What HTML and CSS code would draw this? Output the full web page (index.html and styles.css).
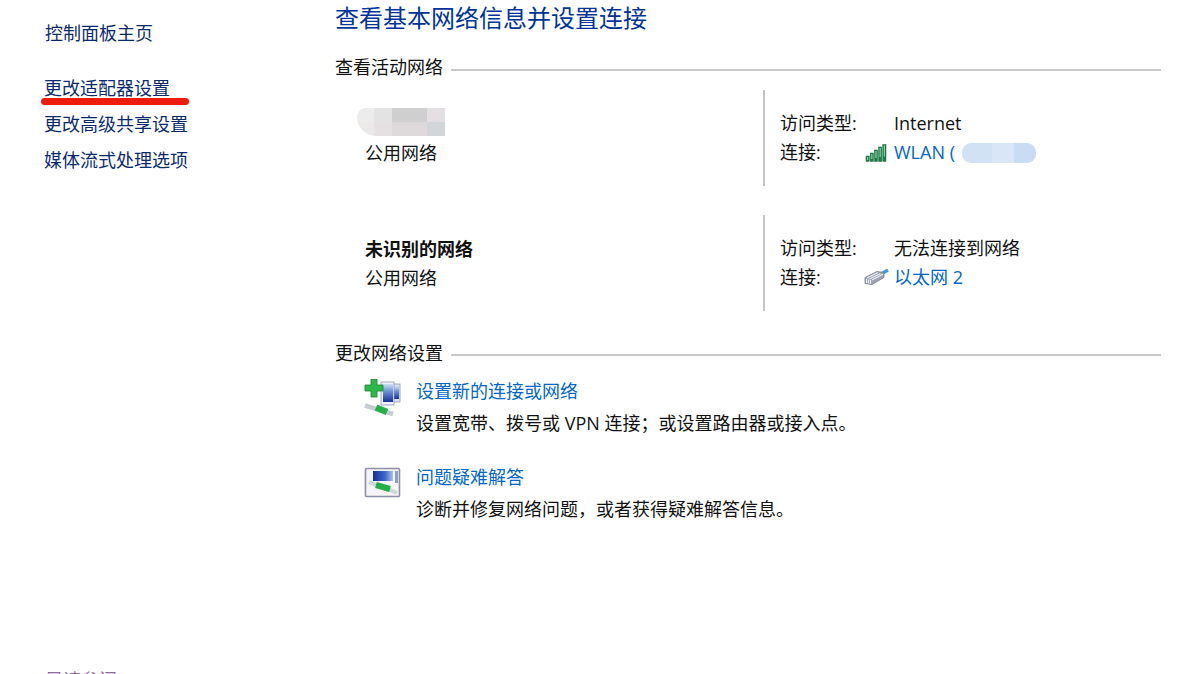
FILE: index.html
```html
<!DOCTYPE html>
<html lang="zh-CN">
<head>
<meta charset="utf-8">
<title>网络和共享中心</title>
<link rel="stylesheet" href="styles.css">
</head>
<body>
<div class="page">
  <aside class="side">
    <a class="side-home">控制面板主页</a>
    <div class="side-links">
      <a class="side-link marked">更改适配器设置<span class="red-mark"></span></a>
      <a class="side-link">更改高级共享设置</a>
      <a class="side-link">媒体流式处理选项</a>
    </div>
    <div class="see-also">另请参阅</div>
  </aside>
  <main class="main">
    <h1 class="title">查看基本网络信息并设置连接</h1>
    <div class="section-head"><span>查看活动网络</span><i class="rule"></i></div>
    <section class="net first">
      <div class="net-left">
        <div class="net-name"><span class="smudge-gray"></span></div>
        <div class="net-kind">公用网络</div>
      </div>
      <div class="net-right">
        <div class="info-row"><span class="info-label">访问类型:</span><span class="info-icon"></span><span class="info-val">Internet</span></div>
        <div class="info-row"><span class="info-label">连接:</span>
          <span class="info-icon">
            <svg class="signal" viewBox="0 0 22 18" width="22" height="18">
              <g fill="#1f7d48" stroke="#1a6a3c" stroke-width=".5">
                <rect x="1" y="12" width="3.2" height="5.5"/><rect x="5.2" y="9" width="3.2" height="8.5"/><rect x="9.4" y="6" width="3.2" height="11.5"/><rect x="13.6" y="3" width="3.2" height="14.5"/><rect x="17.8" y=".5" width="3.2" height="17"/>
              </g>
              <g fill="#7fd2a0">
                <rect x="2" y="13" width="1.2" height="3"/><rect x="6.2" y="10" width="1.2" height="5"/><rect x="10.4" y="7" width="1.2" height="7"/><rect x="14.6" y="4" width="1.2" height="9"/><rect x="18.8" y="1.5" width="1.2" height="11"/>
              </g>
            </svg>
          </span>
          <a class="link wlan">WLAN (<span class="smudge-blue"></span></a></div>
      </div>
    </section>
    <section class="net second">
      <div class="net-left">
        <div class="net-name bold">未识别的网络</div>
        <div class="net-kind">公用网络</div>
      </div>
      <div class="net-right">
        <div class="info-row"><span class="info-label">访问类型:</span><span class="info-icon"></span><span class="info-val">无法连接到网络</span></div>
        <div class="info-row"><span class="info-label">连接:</span>
          <span class="info-icon">
            <svg class="ether" viewBox="0 0 26 18" width="26" height="18">
              <path d="M19 4.5 L25 1" stroke="#3f9be0" stroke-width="3.2" fill="none"/>
              <path d="M2 8.5 L14 2.5 L21 3.5 V8.5 L9 15.5 L2 14.5 Z" fill="#9aa3b0" stroke="#737d8b" stroke-width=".8"/>
              <path d="M4 9 L15 3.6 M6.5 10 L17.5 4.4 M9 11 L20 5.2" stroke="#eef1f5" stroke-width="1.1"/>
              <path d="M3.5 10 V14 M5.5 10.5 V14.6 M7.5 11 V15" stroke="#eef1f5" stroke-width="1.1"/>
            </svg>
          </span>
          <a class="link">以太网 2</a></div>
      </div>
    </section>
    <div class="section-head lower"><span>更改网络设置</span><i class="rule"></i></div>
    <div class="task">
      <svg class="task-icon" viewBox="0 0 37 38" width="37" height="38">
        <defs>
          <linearGradient id="screen" x1="0" y1="0" x2="0" y2="1">
            <stop offset="0" stop-color="#cfe0f5"/>
            <stop offset=".4" stop-color="#6f93d8"/>
            <stop offset="1" stop-color="#14309a"/>
          </linearGradient>
        </defs>
        <rect x="28" y="5" width="8" height="18" fill="#dfe5ef" stroke="#8d97a8" stroke-width=".8"/>
        <rect x="29.5" y="7" width="5.5" height="13" fill="url(#screen)"/>
        <rect x="17" y="3" width="13" height="23" fill="#eef2f8" stroke="#8d97a8" stroke-width=".8"/>
        <rect x="19" y="5" width="10" height="18" fill="url(#screen)"/>
        <path d="M7 0 H13 V6 H19 V12 H13 V18 H7 V12 H1 V6 H7 Z" fill="#2fb84a" stroke="#15802c" stroke-width=".8"/>
        <path d="M1 26.5 L12 30 L29 35" stroke="#c6ccd4" stroke-width="4.5" fill="none"/>
        <path d="M12 28.5 L23 33" stroke="#25b047" stroke-width="6.5" fill="none"/>
      </svg>
      <div class="task-body">
        <a class="link">设置新的连接或网络</a>
        <div class="task-desc">设置宽带、拨号或 VPN 连接；或设置路由器或接入点。</div>
      </div>
    </div>
    <div class="task">
      <svg class="task-icon" viewBox="0 0 37 38" width="37" height="38">
        <defs>
          <linearGradient id="screen2" x1="0" y1="0" x2="1" y2="0">
            <stop offset="0" stop-color="#14309a"/>
            <stop offset=".6" stop-color="#3f66c4"/>
            <stop offset="1" stop-color="#a9c3ea"/>
          </linearGradient>
        </defs>
        <rect x="1.5" y="3.5" width="34" height="28" rx="1" fill="#f5f5f8" stroke="#8d90a4" stroke-width="1.6"/>
        <rect x="9" y="6" width="20" height="10" fill="url(#screen2)"/>
        <rect x="31" y="6" width="3" height="12" fill="#8fa0c0"/>
        <path d="M5 17 L14 21 L26 25 L33 28" stroke="#d0d4db" stroke-width="4" fill="none"/>
        <path d="M12 20 L26 24" stroke="#25b047" stroke-width="6" fill="none"/>
      </svg>
      <div class="task-body">
        <a class="link">问题疑难解答</a>
        <div class="task-desc">诊断并修复网络问题，或者获得疑难解答信息。</div>
      </div>
    </div>
  </main>
</div>
</body>
</html>
```

FILE: styles.css
```css
html, body {
  margin: 0;
  height: 100%;
  overflow: hidden;
  background: #fff;
}
body {
  font-family: "Open Sans", "Noto Sans CJK SC", sans-serif;
  font-size: 18px;
  color: #111;
}
.page {
  display: flex;
  height: 674px;
  overflow: hidden;
}
.side {
  width: 335px;
  flex: none;
  padding: 20px 0 0 44px;
  box-sizing: border-box;
  color: #0a2a6e;
  display: flex;
  flex-direction: column;
  position: relative;
}
.side-home, .side-link {
  display: block;
  line-height: 26px;
  height: 26px;
}
.side-home { margin-left: 1px; }
.side-links {
  margin-top: 29px;
  display: flex;
  flex-direction: column;
  gap: 10px;
}
.marked { position: relative; }
.red-mark {
  position: absolute;
  left: -3px;
  top: 23px;
  width: 148px;
  height: 7px;
  border-radius: 4px;
  background: #ee1c0f;
}
.see-also {
  position: absolute;
  left: 45px;
  top: 667px;
  line-height: 26px;
  color: #8f6aa0;
}
.main {
  flex: none;
  width: 826px;
  display: flex;
  flex-direction: column;
}
.title {
  margin: 0;
  font-size: 24px;
  font-weight: 400;
  line-height: 36px;
  color: #003399;
}
.section-head {
  display: flex;
  align-items: center;
  gap: 8px;
  margin-top: 19px;
  line-height: 24px;
  height: 24px;
}
.section-head.lower { margin-top: 30px; }
.rule {
  flex: 1;
  height: 2px;
  margin-top: 5px;
  background: #c9c9c9;
}
.lower .rule { margin-top: 3px; }
.net {
  display: flex;
  height: 96px;
  margin-top: 11px;
}
.net.second { margin-top: 29px; }
.net-left {
  flex: none;
  width: 430px;
  padding: 20px 0 0 30px;
  box-sizing: border-box;
  border-right: 2px solid #c4c4c4;
}
.net-name {
  height: 29px;
  line-height: 29px;
  position: relative;
}
.net-kind { line-height: 29px; height: 29px; }
.bold { font-weight: 700; }
.smudge-gray {
  position: absolute;
  left: -8px;
  top: -2px;
  width: 88px;
  height: 28px;
  border-radius: 10px 0 0 22px;
  filter: blur(.6px);
  background:
    linear-gradient(90deg, #ececec 0 17px, #e3e3e3 17px 35px, #cfcfcf 35px 70px, #e4dfe2 70px) top / 100% 50% no-repeat,
    linear-gradient(90deg, #ece9e9 0 17px, #e5e1e3 17px 35px, #dedadc 35px 70px, #d2d6d8 70px) bottom / 100% 50% no-repeat;
}
.net-right {
  padding: 19px 0 0 15px;
}
.info-row {
  display: flex;
  align-items: center;
  height: 29px;
  line-height: 29px;
  white-space: nowrap;
}
.info-label { width: 86px; flex: none; }
.info-icon {
  width: 28px;
  flex: none;
  display: flex;
  align-items: center;
}
.signal { margin-left: -1px; }
.ether { margin-left: -3px; filter: blur(.3px); }
.link { color: #0066cc; }
.wlan { position: relative; }
.smudge-blue {
  position: absolute;
  left: 68px;
  top: 5px;
  width: 74px;
  height: 20px;
  border-radius: 9px;
  filter: blur(.5px);
  background: linear-gradient(90deg, #d2e2f5 0 30px, #d9e6f5 30px 52px, #c8dcf3 52px);
}
.task {
  display: flex;
  margin-top: 10px;
  height: 53px;
  margin-bottom: 23px;
}
.task-icon {
  flex: none;
  margin: 4px 15px 0 29px;
  filter: blur(.35px);
}
.task-body a {
  display: block;
  line-height: 32px;
}
.task-desc {
  line-height: 32px;
}
```
